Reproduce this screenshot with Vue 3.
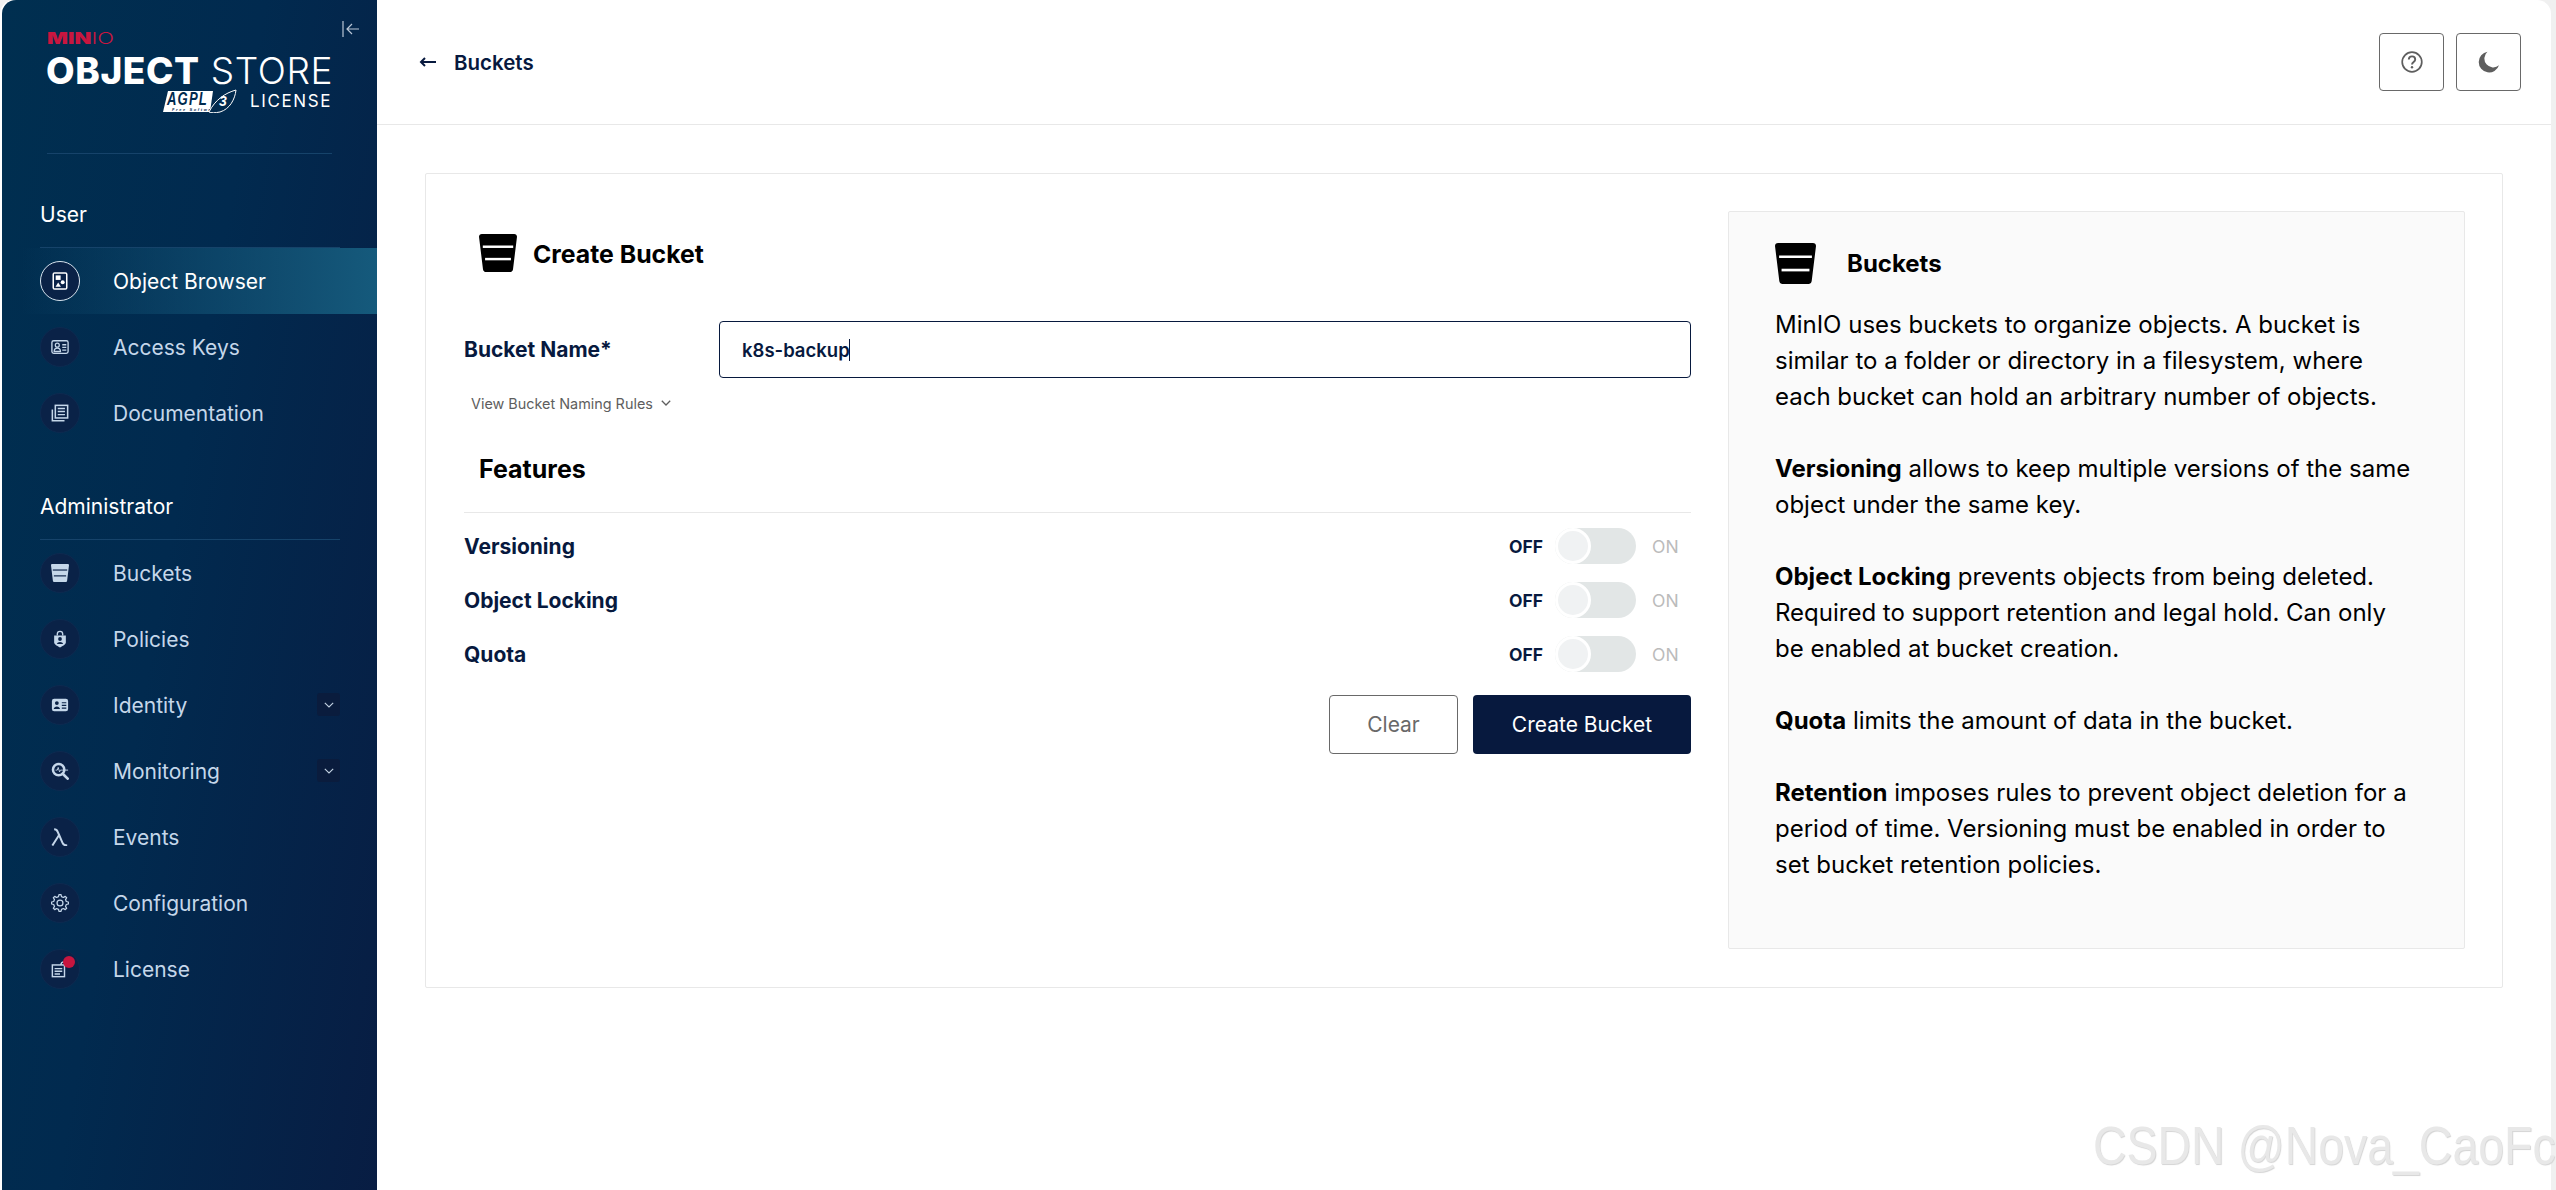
<script setup>
function gearPath() {
  const cx = 10
  const cy = 10
  const outer = 9.4
  const inner = 7.2
  const teeth = 8
  let d = ''
  for (let i = 0; i < teeth; i++) {
    const step = (Math.PI * 2) / teeth
    const a = i * step - Math.PI / 2
    const pts = [
      [inner, a - step * 0.3],
      [outer, a - step * 0.15],
      [outer, a + step * 0.15],
      [inner, a + step * 0.3]
    ]
    pts.forEach(([r, t], j) => {
      const x = (cx + r * Math.cos(t)).toFixed(2)
      const y = (cy + r * Math.sin(t)).toFixed(2)
      d += (i === 0 && j === 0 ? 'M' : 'L') + x + ' ' + y
    })
  }
  return d + 'Z'
}

const icons = {
  browser: '<rect x="2.500" y="1" width="15" height="18" rx="1.500" fill="none" stroke="currentColor" stroke-width="1.700"/><rect x="5.200" y="3.800" width="5.500" height="5" fill="currentColor"/><circle cx="13" cy="11.500" r="2.200" fill="currentColor"/><path d="M8 11.800l3 4.700H5z" fill="currentColor"/>',
  keys: '<rect x="1" y="3" width="18" height="14" rx="2" fill="none" stroke="currentColor" stroke-width="1.500"/><circle cx="7" cy="8" r="2.200" fill="none" stroke="currentColor" stroke-width="1.400"/><path d="M3.500 15c0-5 7-5 7 0z" fill="none" stroke="currentColor" stroke-width="1.400"/><path d="M12.500 7.500h4.500M12.500 10.500h4.500M12.500 13.500h4.500" stroke="currentColor" stroke-width="1.400"/>',
  docs: '<path d="M1.500 6v12.500H15" fill="none" stroke="currentColor" stroke-width="1.700"/><rect x="4.800" y="1.500" width="13.700" height="14" fill="none" stroke="currentColor" stroke-width="1.700"/><path d="M7.500 5h8M7.500 8.400h8M7.500 11.800h8" stroke="currentColor" stroke-width="1.600"/>',
  bucket: '<path d="M0 1.500C0 .6.600 0 1.500 0h17C19.400 0 20 .6 20 1.500l-2.100 17c-.1.900-.8 1.500-1.600 1.500H3.700c-.8 0-1.500-.6-1.600-1.500z" fill="currentColor"/><path d="M2 6.700h16" stroke="var(--cut)" stroke-width="1.300"/><path d="M3.200 13.200h13.600" stroke="var(--cut)" stroke-width="1.300"/>',
  policy: '<path d="M7 6V4.500a3 3 0 0 1 6 0V6" fill="none" stroke="currentColor" stroke-width="1.500"/><path d="M3.500 6h13v8c0 2-3.500 4-6.500 5.500-3-1.500-6.500-3.500-6.500-5.500z" fill="currentColor"/><circle cx="10" cy="10" r="2.100" fill="#0a2247"/><path d="M6.500 15.500c.5-3 6.500-3 7 0z" fill="#0a2247"/>',
  identity: '<rect x="1" y="3" width="18" height="14" rx="2.500" fill="currentColor"/><circle cx="6.500" cy="7.800" r="2.100" fill="#0a2247"/><path d="M3 14.500c.4-3.800 6.600-3.800 7 0z" fill="#0a2247"/><path d="M12 7.500h5M12 10.500h5M12 13.500h5" stroke="#0a2247" stroke-width="1.300"/>',
  monitor: '<circle cx="8.500" cy="8.500" r="6.300" fill="none" stroke="currentColor" stroke-width="2.800"/><path d="M13 13l5.500 5.500" stroke="currentColor" stroke-width="3" stroke-linecap="round"/><path d="M5 9h2l1-3 1.500 5 1-2H19" fill="none" stroke="currentColor" stroke-width="1"/>',
  events: '<path d="M1.500 19.500 9 7.800 7.600 4.500C6.900 2.800 6 1.500 3.500 1.500M9 7.800l3.800 8.700c.7 1.700 2 3 5.200 3" fill="none" stroke="currentColor" stroke-width="2.200"/>',
  config: '<path d="' + gearPath() + '" fill="none" stroke="currentColor" stroke-width="1.400" stroke-linejoin="round"/><circle cx="10" cy="10" r="3.300" fill="none" stroke="currentColor" stroke-width="1.400"/>',
  license: '<rect x="1.500" y="5.500" width="13.500" height="13" fill="none" stroke="currentColor" stroke-width="1.600"/><path d="M4 9.500h8.500M4 12.500h8.500M4 15.500h6" stroke="currentColor" stroke-width="1.500"/><path d="M11 5.500c0-2 1.500-3.500 3.500-3.500" fill="none" stroke="currentColor" stroke-width="1.500"/>'
}

const userItems = [
  { label: 'Object Browser', icon: 'browser', active: true },
  { label: 'Access Keys', icon: 'keys' },
  { label: 'Documentation', icon: 'docs' }
]

const adminItems = [
  { label: 'Buckets', icon: 'bucket' },
  { label: 'Policies', icon: 'policy' },
  { label: 'Identity', icon: 'identity', more: true },
  { label: 'Monitoring', icon: 'monitor', more: true },
  { label: 'Events', icon: 'events' },
  { label: 'Configuration', icon: 'config' },
  { label: 'License', icon: 'license', badge: true }
]

const sections = [
  { title: 'User', items: userItems },
  { title: 'Administrator', items: adminItems }
]

const features = ['Versioning', 'Object Locking', 'Quota']
</script>

<template>
  <div class="page">
    <aside class="sidebar">
      <div class="brand">
        <div class="logo">
          <div class="logo-minio"><b>MIN</b><span>IO</span></div>
          <div class="logo-store"><b>OBJECT</b> <span>STORE</span></div>
          <div class="logo-license">
            <svg class="agpl" viewBox="0 0 74 24" width="74" height="24">
              <path d="M5 2H50L47 23H0z" fill="#fff" />
              <text x="4" y="16" class="agpl-text" textLength="41" lengthAdjust="spacingAndGlyphs">AGPL</text>
              <text x="9" y="21.500" class="agpl-small">Free Software</text>
              <path d="M46 23C52 11 62 4 73 1c-1 9-6 19-16 22-5 1-9 1-11 0z" fill="#012a4e" stroke="#fff" stroke-width="1" />
              <text x="56" y="17" class="agpl-three">3</text>
            </svg>
            <span>LICENSE</span>
          </div>
        </div>
        <svg class="collapse" viewBox="0 0 18 18" width="18" height="18">
          <path d="M1 1v16M17 9H5M10 4 5 9l5 5" fill="none" stroke="#b9c6d6" stroke-width="1.200" />
        </svg>
      </div>

      <nav>
        <section v-for="section in sections" :key="section.title">
          <h3 class="section-title">{{ section.title }}</h3>
          <a
            v-for="item in section.items"
            :key="item.label"
            class="nav-item"
            :class="{ active: item.active }"
          >
            <span class="nav-icon">
              <svg viewBox="0 0 20 20" width="18" height="18" v-html="icons[item.icon]"></svg>
              <i v-if="item.badge" class="badge"></i>
            </span>
            <span class="nav-label">{{ item.label }}</span>
            <span v-if="item.more" class="nav-more">
              <svg viewBox="0 0 10 6" width="10" height="6"><path d="M.8.8 5 5 9.200.8" fill="none" stroke="#c3d2e2" stroke-width="1.100" /></svg>
            </span>
          </a>
        </section>
      </nav>
    </aside>

    <main class="main">
      <header class="topbar">
        <a class="back">
          <svg viewBox="0 0 18 10" width="18" height="10"><path d="M17 5H2M6 1 2 5l4 4" fill="none" stroke="#07193e" stroke-width="2" /></svg>
          <span>Buckets</span>
        </a>
        <div class="top-actions">
          <button class="icon-btn">
            <svg viewBox="0 0 22 22" width="22" height="22">
              <circle cx="11" cy="11" r="9.800" fill="none" stroke="#5e5e5e" stroke-width="1.700" />
              <path d="M7.800 8.500c.2-4.200 6.400-4 6.400 0 0 2.500-3.200 2.300-3.200 5" fill="none" stroke="#5e5e5e" stroke-width="1.900" />
              <circle cx="11" cy="16.200" r="1.200" fill="#5e5e5e" />
            </svg>
          </button>
          <button class="icon-btn">
            <svg viewBox="0 0 22 22" width="22" height="22">
              <path d="M9.500.8A10.400 10.400 0 1 0 21 14.300 8.600 8.600 0 0 1 9.500.8z" fill="#5e5e5e" />
            </svg>
          </button>
        </div>
      </header>

      <div class="content">
        <div class="card">
          <form class="form" @submit.prevent>
            <div class="form-title">
              <svg class="bucket-dark" viewBox="0 0 20 20" width="38" height="38" v-html="icons.bucket"></svg>
              <h1>Create Bucket</h1>
            </div>

            <div class="field">
              <label>Bucket Name*</label>
              <div class="input">k8s-backup<span class="caret"></span></div>
            </div>

            <div class="rules">
              View Bucket Naming Rules
              <svg viewBox="0 0 10 6" width="10" height="6"><path d="M.8.8 5 5 9.200.8" fill="none" stroke="#5e5e5e" stroke-width="1.300" /></svg>
            </div>

            <div class="features-head">
              <h2>Features</h2>
            </div>

            <div v-for="feature in features" :key="feature" class="feature">
              <span class="feature-label">{{ feature }}</span>
              <span class="off">OFF</span>
              <span class="switch"><i></i></span>
              <span class="on">ON</span>
            </div>

            <div class="buttons">
              <button class="btn clear" type="button">Clear</button>
              <button class="btn create" type="submit">Create Bucket</button>
            </div>
          </form>

          <aside class="help">
            <div class="help-title">
              <svg class="bucket-dark" viewBox="0 0 20 20" width="41" height="41" v-html="icons.bucket"></svg>
              <h2>Buckets</h2>
            </div>
            <p>MinIO uses buckets to organize objects. A bucket is similar to a folder or directory in a filesystem, where each bucket can hold an arbitrary number of objects.</p>
            <p><b>Versioning</b> allows to keep multiple versions of the same object under the same key.</p>
            <p><b>Object Locking</b> prevents objects from being deleted. Required to support retention and legal hold. Can only be enabled at bucket creation.</p>
            <p><b>Quota</b> limits the amount of data in the bucket.</p>
            <p><b>Retention</b> imposes rules to prevent object deletion for a period of time. Versioning must be enabled in order to set bucket retention policies.</p>
          </aside>
        </div>
      </div>
    </main>

    <div class="watermark">CSDN @Nova_CaoFc</div>
  </div>
</template>

<style>
html, body { margin: 0; background: #fff; overflow: hidden; }
</style>

<style scoped>
.page {
  position: relative;
  display: flex;
  width: 2556px;
  height: 1190px;
  overflow: hidden;
  font-family: Inter, "Liberation Sans", sans-serif;
  background: #f0f0f0;
}
.sidebar {
  flex: none;
  width: 375px;
  margin-left: 2px;
  color: #fff;
  border-top-left-radius: 14px;
  background: linear-gradient(100deg, #002f50 0%, #012a4f 45%, #081d43 100%);
  box-shadow: -2px 0 0 #fff;
}
.brand { position: relative; height: 153px; margin: 0 45px; border-bottom: 1px solid #16436a; box-sizing: content-box; }
.logo { padding-top: 28px; width: 285px; }
.logo-minio { display: inline-block; font-size: 15.500px; line-height: 16px; color: #c8163f; transform: scaleX(1.42); transform-origin: left; white-space: nowrap; }
.logo-minio b { font-weight: 900; }
.logo-minio span { font-weight: 300; }
.logo-store { margin-top: 2px; font-size: 37px; line-height: 42px; white-space: nowrap; letter-spacing: .6px; margin-left: -1px; }
.logo-store b { font-weight: 800; }
.logo-store span { font-weight: 300; }
.logo-license { display: flex; align-items: center; justify-content: flex-end; gap: 13px; margin-top: -4px; height: 26px; font-size: 17px; letter-spacing: 1.600px; font-weight: 400; }
.agpl { flex: none; }
.agpl-text { font: italic 700 18px "Liberation Sans", sans-serif; fill: #012a4e; }
.agpl-small { font: italic 700 4px "Liberation Sans", sans-serif; fill: #012a4e; }
.agpl-three { font: italic 700 14px "Liberation Sans", sans-serif; fill: #fff; }
.collapse { position: absolute; top: 20px; right: -28px; }

.section-title {
  box-sizing: border-box;
  display: flex;
  align-items: flex-end;
  height: 94px;
  margin: 0 37px 0 38px;
  padding-bottom: 20px;
  font-size: 21px;
  line-height: 24px;
  font-weight: 400;
  border-bottom: 1px solid #16436a;
}
.nav-item {
  position: relative;
  display: flex;
  align-items: center;
  height: 66px;
  padding-left: 38px;
  color: #c5d7ea;
  --cut: #0a2247;
}
.nav-item.active {
  color: #fff;
  background: linear-gradient(90deg, rgba(21, 90, 124, 0) 5%, #155a7c 100%);
}
.nav-icon {
  position: relative;
  flex: none;
  display: flex;
  align-items: center;
  justify-content: center;
  box-sizing: border-box;
  width: 40px;
  height: 40px;
  border-radius: 50%;
  background: #0a2247;
  border: 1px solid #0d2a50;
}
.active .nav-icon { border: 1.500px solid #d7e3ee; background: #0a2247; }
.badge {
  position: absolute;
  top: 6px;
  right: 4px;
  width: 12px;
  height: 12px;
  border-radius: 50%;
  background: #c8163f;
}
.nav-label { margin-left: 33px; padding-top: 1px; font-size: 21px; line-height: 24px; }
.nav-more {
  position: absolute;
  right: 37px;
  top: 21px;
  display: flex;
  align-items: center;
  justify-content: center;
  width: 23px;
  height: 23px;
  border-radius: 3px;
  background: #0a1c3d;
}

.main {
  flex: 1;
  min-width: 0;
  background: #fff;
  margin-right: 5px;
  border-top-right-radius: 14px;
}
.topbar {
  box-sizing: border-box;
  display: flex;
  align-items: center;
  justify-content: space-between;
  height: 125px;
  padding: 0 30px 0 42px;
  border-bottom: 1px solid #e8e8e8;
}
.back { display: flex; align-items: center; gap: 17px; color: #07193e; font-size: 20.500px; font-weight: 600; }
.top-actions { display: flex; gap: 12px; margin-top: -1px; }
.icon-btn {
  display: flex;
  align-items: center;
  justify-content: center;
  box-sizing: border-box;
  width: 65px;
  height: 58px;
  padding: 0;
  background: #fff;
  border: 1.500px solid #696969;
  border-radius: 4px;
}

.content { padding: 48px 48px 0; }
.card {
  box-sizing: border-box;
  display: flex;
  gap: 37px;
  height: 815px;
  padding: 37px;
  border: 1px solid #e8e8e8;
  border-radius: 2px;
}
.form { flex: 1; min-width: 0; padding-left: 1px; }
.form-title { display: flex; align-items: center; gap: 16px; height: 38px; margin-top: 23px; padding-left: 15px; color: #000; --cut: #fff; }
.form-title h1 { margin: 2px 0 0; font-size: 24.800px; font-weight: 700; line-height: 38px; }
.field { display: flex; align-items: center; margin-top: 49px; }
.field label { flex: none; width: 255px; color: #07193e; font-size: 21px; font-weight: 700; }
.input {
  flex: 1;
  box-sizing: border-box;
  display: flex;
  align-items: center;
  height: 57px;
  padding-left: 22px;
  color: #07193e;
  font-size: 18.500px;
  font-weight: 600;
  border: 1.500px solid #07193e;
  border-radius: 4px;
}
.caret { width: 1.500px; height: 22px; margin-left: -1px; background: #07193e; }
.rules { display: flex; align-items: center; gap: 8px; height: 20px; margin: 15px 0 0 7px; color: #5e5e5e; font-size: 14.400px; }
.features-head { box-sizing: border-box; height: 59px; margin: 41px 0 6px; padding-left: 15px; border-bottom: 1px solid #e8e8e8; }
.features-head h2 { margin: 0; color: #000; font-size: 25px; font-weight: 700; line-height: 30px; }
.feature { display: flex; align-items: center; height: 54px; }
.feature-label { flex: 1; color: #07193e; font-size: 21px; font-weight: 700; }
.off { color: #07193e; font-size: 17.500px; font-weight: 700; }
.switch {
  position: relative;
  flex: none;
  width: 81px;
  height: 36px;
  margin: 0 16px 0 12px;
  border-radius: 18px;
  background: #e2e6e6;
}
.switch i {
  position: absolute;
  left: 0;
  top: 0;
  box-sizing: border-box;
  width: 36px;
  height: 36px;
  border-radius: 50%;
  background: #f0f2f3;
  border: 3px solid #fff;
}
.on { width: 39px; color: #bbb; font-size: 17.500px; font-weight: 400; }
.buttons { display: flex; justify-content: flex-end; gap: 15px; margin-top: 14px; }
.btn {
  box-sizing: border-box;
  height: 59px;
  padding: 0;
  font-family: inherit;
  font-size: 21px;
  font-weight: 400;
  border-radius: 4px;
}
.clear { width: 129px; color: #696969; background: #fff; border: 1.500px solid #696969; }
.create { width: 218px; color: #fff; background: #07193e; border: 0; }

.help {
  box-sizing: border-box;
  flex: none;
  width: 737px;
  height: 738px;
  padding: 31px 47px 0 46px;
  color: #000;
  background: #fafafa;
  border: 1px solid #e8e8e8;
  border-radius: 2px;
}
.help-title { display: flex; align-items: center; gap: 31px; height: 40px; --cut: #fff; margin-bottom: 24px; }
.help-title h2 { margin: 0; font-size: 24px; font-weight: 700; }
.help p { margin: 0 0 36px; font-size: 24px; line-height: 36px; }
.help b { font-weight: 700; }

.watermark {
  position: absolute;
  left: 2093px;
  top: 1115px;
  color: #e8e8e8;
  font-family: "Liberation Sans", sans-serif;
  font-size: 54px;
  line-height: 60px;
  white-space: nowrap;
  text-shadow: 1px 1px 1px #d4d4d4;
  transform: scaleX(.86);
  transform-origin: left;
}
</style>
